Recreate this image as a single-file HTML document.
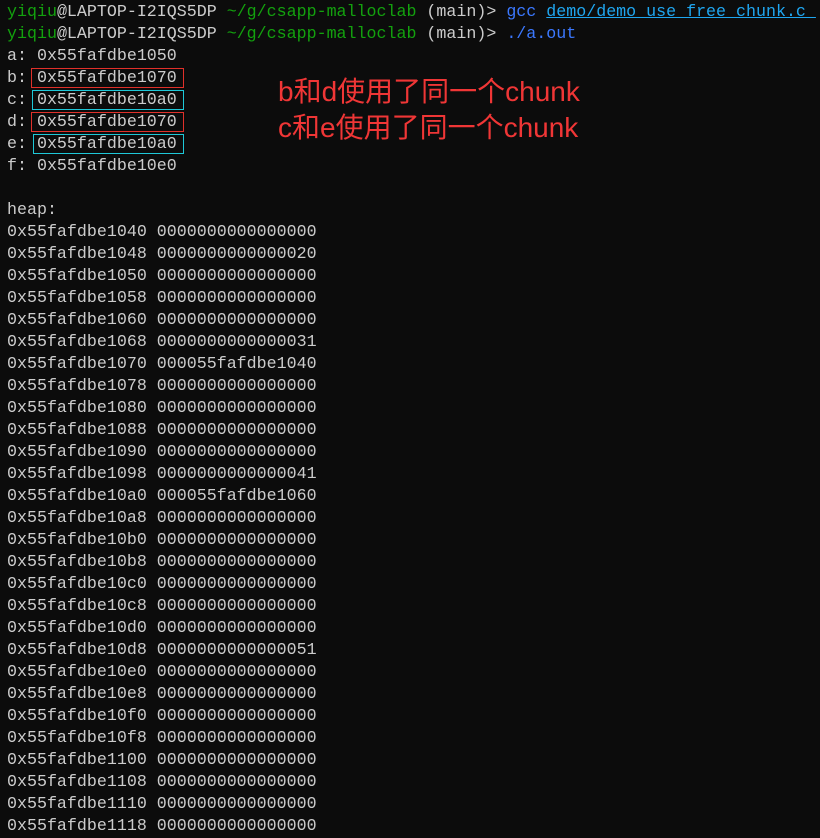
<!DOCTYPE html>
<html><head><meta charset="utf-8"><style>
html,body{margin:0;padding:0;background:#0c0c0c;width:820px;height:838px;overflow:hidden}
pre{margin:0;position:absolute;left:7px;top:1px;font-family:"Liberation Mono","DejaVu Sans Mono",monospace;font-size:16.65px;line-height:22px;color:#cccccc}
.g{color:#13a10e}.b{color:#3b78ff}.l{color:#1fa6f0;text-decoration:underline}
.box{position:absolute;border:1px solid;height:18px}
.r{border-color:#e0302a}.c{border-color:#1ec8d8}
.ann{position:absolute;left:278px;color:#f03636;font-family:"Liberation Sans","Noto Sans CJK SC",sans-serif;font-size:28px;line-height:36px}
</style></head><body>
<pre><span class="g">yiqiu</span>@LAPTOP-I2IQS5DP <span class="g">~/g/csapp-malloclab</span> (main)&gt; <span class="b">gcc</span> <span class="l">demo/demo_use_free_chunk.c </span>
<span class="g">yiqiu</span>@LAPTOP-I2IQS5DP <span class="g">~/g/csapp-malloclab</span> (main)&gt; <span class="b">./a.out</span>
a: 0x55fafdbe1050
b: 0x55fafdbe1070
c: 0x55fafdbe10a0
d: 0x55fafdbe1070
e: 0x55fafdbe10a0
f: 0x55fafdbe10e0

heap:
0x55fafdbe1040 0000000000000000
0x55fafdbe1048 0000000000000020
0x55fafdbe1050 0000000000000000
0x55fafdbe1058 0000000000000000
0x55fafdbe1060 0000000000000000
0x55fafdbe1068 0000000000000031
0x55fafdbe1070 000055fafdbe1040
0x55fafdbe1078 0000000000000000
0x55fafdbe1080 0000000000000000
0x55fafdbe1088 0000000000000000
0x55fafdbe1090 0000000000000000
0x55fafdbe1098 0000000000000041
0x55fafdbe10a0 000055fafdbe1060
0x55fafdbe10a8 0000000000000000
0x55fafdbe10b0 0000000000000000
0x55fafdbe10b8 0000000000000000
0x55fafdbe10c0 0000000000000000
0x55fafdbe10c8 0000000000000000
0x55fafdbe10d0 0000000000000000
0x55fafdbe10d8 0000000000000051
0x55fafdbe10e0 0000000000000000
0x55fafdbe10e8 0000000000000000
0x55fafdbe10f0 0000000000000000
0x55fafdbe10f8 0000000000000000
0x55fafdbe1100 0000000000000000
0x55fafdbe1108 0000000000000000
0x55fafdbe1110 0000000000000000
0x55fafdbe1118 0000000000000000</pre>
<div class="box r" style="left:31px;top:68px;width:151px"></div>
<div class="box c" style="left:32px;top:90px;width:150px"></div>
<div class="box r" style="left:31px;top:112px;width:151px"></div>
<div class="box c" style="left:33px;top:134px;width:149px"></div>
<div class="ann" style="top:74px">b和d使用了同一个chunk</div>
<div class="ann" style="top:110px">c和e使用了同一个chunk</div>
</body></html>
